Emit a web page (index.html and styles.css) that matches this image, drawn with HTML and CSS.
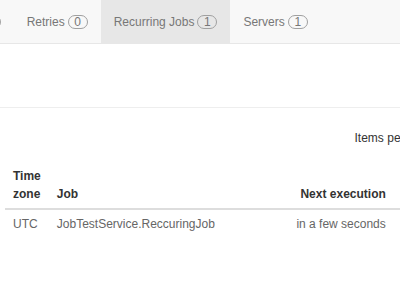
FILE: index.html
```html
<!DOCTYPE html>
<html lang="en">
<head>
  <meta charset="UTF-8" />
  <title>Recurring Jobs – Hangfire Dashboard</title>
  <link rel="stylesheet" href="styles.css">
</head>
<body>

  <!-- Top navigation -->
  <nav class="navbar">
    <ul class="nav">
      <li><a href="#">Failed <span class="badge">0</span></a></li>
      <li><a href="#">Retries <span class="badge">0</span></a></li>
      <li class="active"><a href="#">Recurring Jobs <span class="badge">1</span></a></li>
      <li><a href="#">Servers <span class="badge">1</span></a></li>
    </ul>
  </nav>

  <div class="page-header"></div>

  <div class="container">
    <!-- Page size selector -->
    <div class="toolbar">
      <span class="page-size-label">Items per page:</span>
      <div class="btn-group">
        <a class="btn" href="#">10</a>
        <a class="btn active" href="#">20</a>
        <a class="btn" href="#">50</a>
      </div>
    </div>

    <table class="table">
      <thead>
        <tr>
          <th class="col-tz">Time zone</th>
          <th class="col-job">Job</th>
          <th class="col-next align-right">Next execution</th>
          <th class="col-last align-right">Last execution</th>
          <th class="col-created align-right">Created</th>
        </tr>
      </thead>
      <tbody>
        <tr>
          <td>UTC</td>
          <td>JobTestService.ReccuringJob</td>
          <td class="align-right">in a few seconds</td>
          <td class="align-right">N/A</td>
          <td class="align-right">a minute ago</td>
        </tr>
      </tbody>
    </table>
  </div>

</body>
</html>
```

FILE: styles.css
```css
:root {
  --text: #333333;
  --text-muted: #777777;
  --text-cell: #666666;
  --nav-bg: #f8f8f8;
  --nav-active: #e7e7e7;
  --border: #dddddd;
  --border-light: #eeeeee;
}

* {
  box-sizing: border-box;
  margin: 0;
  padding: 0;
}

body {
  font-family: "Liberation Sans", Arial, sans-serif;
  font-size: 12px;
  color: var(--text);
  background: #ffffff;
  width: 400px;
  overflow: hidden;
}

a {
  text-decoration: none;
  color: inherit;
}

/* Navbar */
.navbar {
  height: 44px;
  background: var(--nav-bg);
  border-bottom: 1px solid var(--nav-active);
}

.nav {
  list-style: none;
  display: flex;
  height: 100%;
  margin-left: -68px;
}

.nav li a {
  display: flex;
  align-items: center;
  gap: 3px;
  height: 43px;
  padding: 0 13px;
  color: var(--text-muted);
}

.nav li.active a {
  background: var(--nav-active);
}

.badge {
  display: inline-block;
  min-width: 20px;
  height: 14px;
  padding: 0 5px;
  border: 1px solid #a0a0a0;
  border-radius: 8px;
  font-size: 12px;
  line-height: 12px;
  text-align: center;
  color: var(--text-muted);
}

/* Content */
.page-header {
  height: 64px;
  border-bottom: 1px solid var(--border-light);
}

.container {
  width: 548px;
  padding: 0 5px;
}

.toolbar {
  display: flex;
  justify-content: flex-end;
  align-items: flex-start;
  gap: 8px;
  height: 53px;
  padding-top: 17px;
}

.page-size-label {
  line-height: 26px;
  color: var(--text);
}

.btn-group {
  display: flex;
}

.btn {
  padding: 4px 9px;
  border: 1px solid #cccccc;
  margin-left: -1px;
  color: var(--text);
  line-height: 16px;
}

.btn.active {
  background: #e6e6e6;
}

.table {
  border-collapse: collapse;
  width: 750px;
}

.table th,
.table td {
  text-align: left;
  line-height: 18px;
}

.table th {
  vertical-align: bottom;
  padding: 6px 8px 5px;
  border-bottom: 2px solid var(--border);
  font-weight: bold;
  color: var(--text);
}

.table td {
  vertical-align: top;
  padding: 5px 8px;
  color: var(--text-cell);
}

.table .align-right {
  text-align: right;
}

.col-tz {
  width: 1px;
}

.col-job {
  width: 238px;
}

.col-next {
  width: 107px;
}
```
